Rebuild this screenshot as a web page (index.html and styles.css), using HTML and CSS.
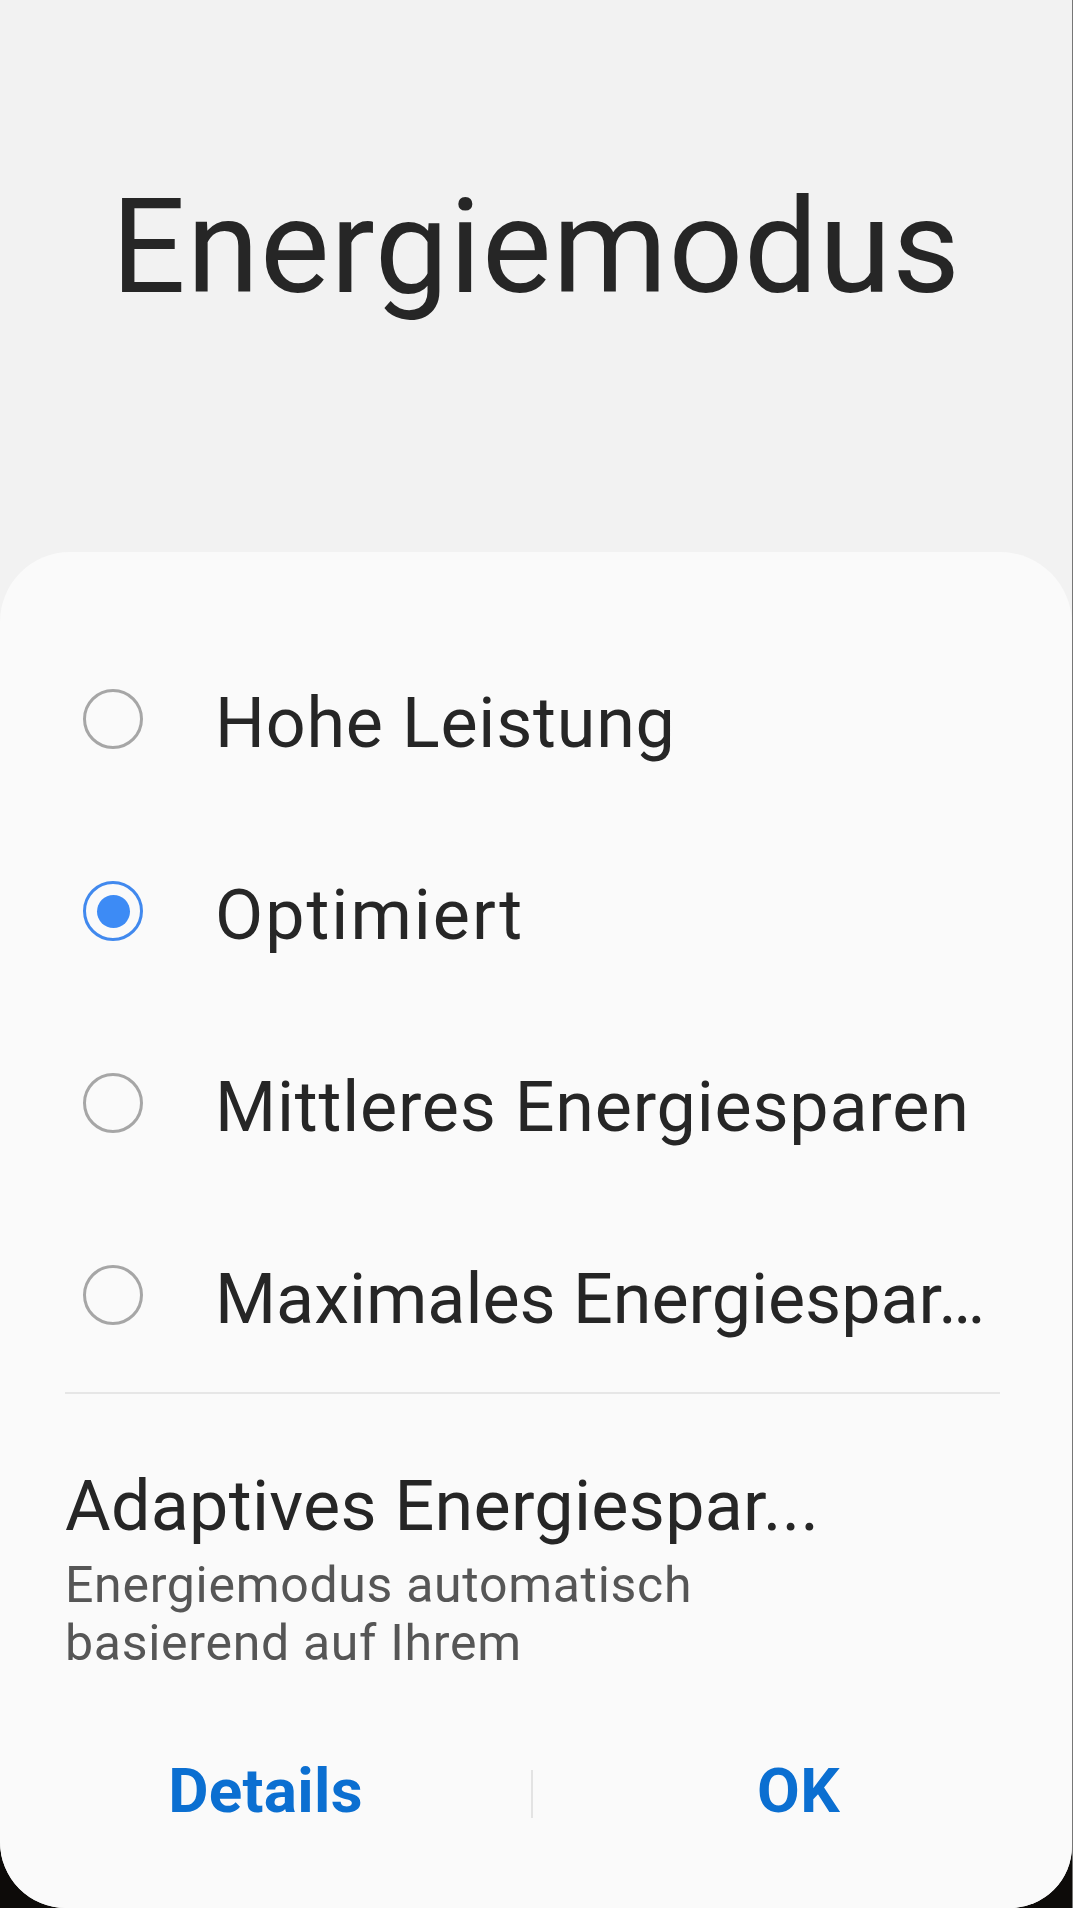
FILE: index.html
```html
<!DOCTYPE html>
<html lang="de">
<head>
<meta charset="utf-8">
<title>Energiemodus</title>
<link rel="stylesheet" href="styles.css">
</head>
<body>
<div class="phone">
  <div class="screen">
    <header class="top">
      <h1 class="title">Energiemodus</h1>
    </header>
    <section class="card">
      <ul class="options">
        <li class="option"><span class="radio"></span><span class="label">Hohe Leistung</span></li>
        <li class="option"><span class="radio checked"></span><span class="label label-wide">Optimiert</span></li>
        <li class="option"><span class="radio"></span><span class="label">Mittleres Energiesparen</span></li>
        <li class="option"><span class="radio"></span><span class="label label-tight">Maximales Energiespar…</span></li>
      </ul>
      <div class="divider"></div>
      <div class="adaptive">
        <div class="adaptive-title">Adaptives Energiespar...</div>
        <div class="adaptive-sub">Energiemodus automatisch<br>basierend auf Ihrem</div>
      </div>
      <div class="buttons">
        <button class="btn">Details</button>
        <span class="sep"></span>
        <button class="btn">OK</button>
      </div>
    </section>
  </div>
</div>
</body>
</html>
```
FILE: styles.css
```css
html, body {
  margin: 0;
  padding: 0;
}
body {
  background: #0d0b09;
  font-family: Roboto, "Noto Sans", sans-serif;
  color: #262626;
}
.phone {
  width: 1072px;
  height: 1908px;
  border-right: 1px solid #767676;
  background: #0d0b09;
}
.screen {
  height: 1908px;
  background: #f2f2f2;
  border-radius: 0 0 62px 66px;
  overflow: hidden;
  display: flex;
  flex-direction: column;
}
.top {
  height: 552px;
  box-sizing: border-box;
  padding-top: 182px;
}
.title {
  margin: 0;
  font-weight: 400;
  font-size: 131px;
  line-height: 131px;
  text-align: center;
  color: #262626;
  letter-spacing: 1px;
}
.card {
  flex: 1;
  background: #fafafa;
  border-radius: 70px 72px 0 0;
  padding-top: 71px;
  display: flex;
  flex-direction: column;
}
.options {
  list-style: none;
  margin: 0;
  padding: 0;
}
.option {
  height: 192px;
  display: flex;
  align-items: center;
  padding-left: 83px;
}
.radio {
  width: 60px;
  height: 60px;
  box-sizing: border-box;
  border: 3px solid #a6a6a6;
  border-radius: 50%;
  flex: none;
  display: flex;
  align-items: center;
  justify-content: center;
}
.radio.checked {
  border-color: #4189ee;
}
.radio.checked::after {
  content: "";
  width: 33px;
  height: 33px;
  border-radius: 50%;
  background: #3d8bf5;
}
.label {
  margin-left: 72px;
  padding-top: 8px;
  font-size: 70px;
  line-height: 70px;
  white-space: nowrap;
  letter-spacing: 0.8px;
  color: #262626;
}
.label-wide {
  letter-spacing: 2px;
}
.label-tight {
  letter-spacing: 0;
}
.divider {
  height: 2px;
  background: #e6e6e6;
  margin: 1px 72px 0 65px;
}
.adaptive {
  padding: 0 65px;
  margin-top: 77px;
}
.adaptive-title {
  font-size: 70px;
  line-height: 70px;
  white-space: nowrap;
  letter-spacing: 0.3px;
  color: #262626;
}
.adaptive-sub {
  margin-top: 15px;
  font-size: 50px;
  line-height: 58px;
  color: #565656;
  letter-spacing: 0.7px;
}
.buttons {
  margin-top: 88px;
  padding-right: 8px;
  display: flex;
  align-items: center;
}
.btn {
  flex: 1;
  border: 0;
  background: none;
  padding: 0;
  font-family: Roboto, "Noto Sans", sans-serif;
  font-weight: 700;
  font-size: 62px;
  line-height: 62px;
  letter-spacing: 0.3px;
  color: #0b6fd1;
  text-align: center;
}
.sep {
  width: 2px;
  height: 48px;
  background: #e3e3e3;
  margin-top: 6px;
}
```
